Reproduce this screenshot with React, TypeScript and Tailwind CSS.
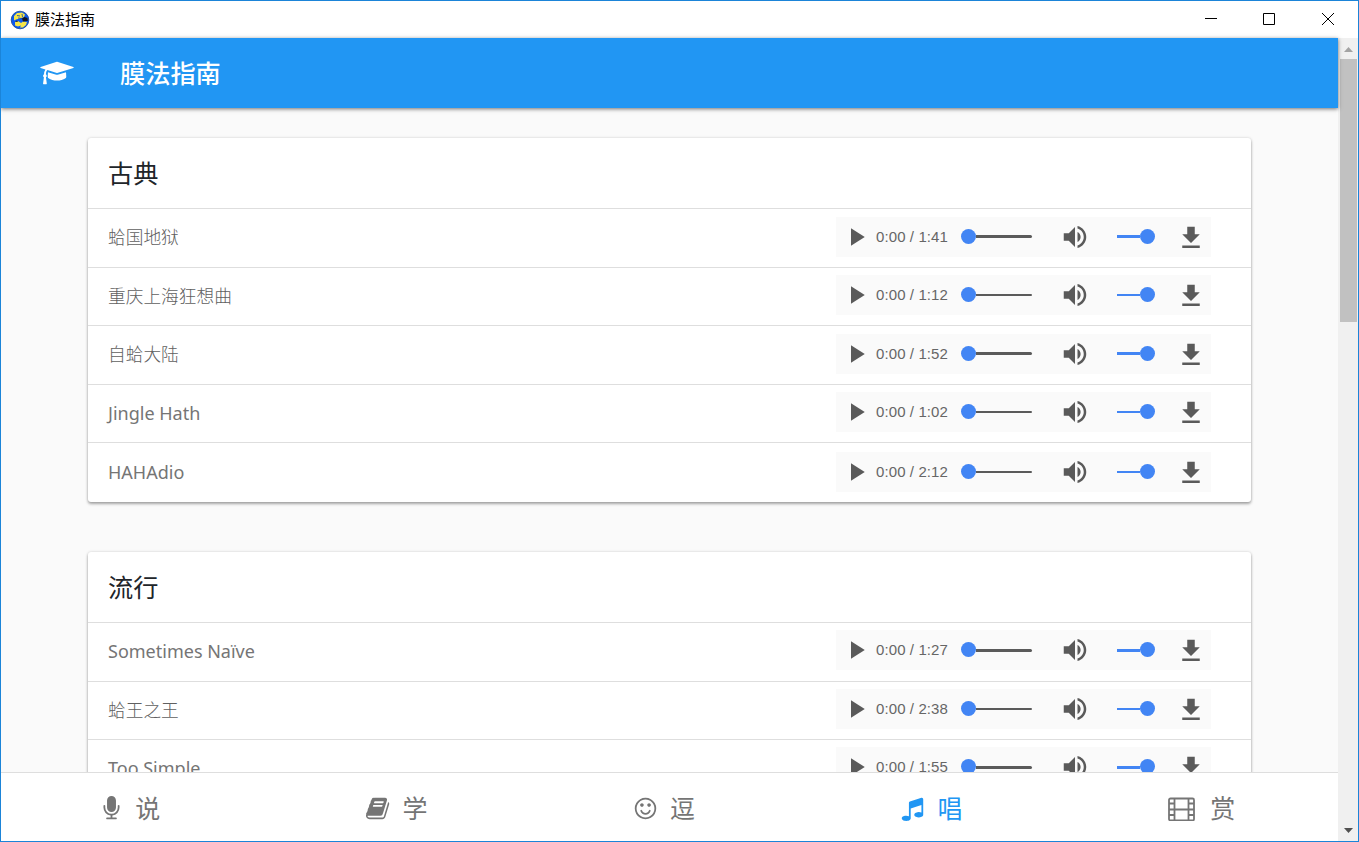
const CAP =
  "M1774 836l18 316q4 69-82 128t-235 93.500-323 34.500-323-34.500-235-93.500-82-128l18-316 574 181q22 7 48 7t48-7zm530-324q0 23-22 31l-1120 352q-4 1-10 1t-10-1l-652-206q-43 34-71 111.500t-34 178.500q63 36 63 109 0 69-58 107l58 433q2 14-8 25-9 11-24 11h-192q-15 0-24-11-10-11-8-25l58-433q-58-38-58-107 0-73 65-111 11-207 98-330l-333-104q-22-8-22-31t22-31l1120-352q4-1 10-1t10 1l1120 352q22 8 22 31z";
const MIC =
  "M1472 704v128q0 221-147.500 384.500t-364.500 187.500v132h256q26 0 45 19t19 45-19 45-45 19h-640q-26 0-45-19t-19-45 19-45 45-19h256v-132q-217-24-364.500-187.500t-147.500-384.500v-128q0-26 19-45t45-19 45 19 19 45v128q0 185 131.500 316.500t316.500 131.500 316.500-131.500 131.500-316.500v-128q0-26 19-45t45-19 45 19 19 45zm-256-384v512q0 132-94 226t-226 94-226-94-94-226v-512q0-132 94-226t226-94 226 94 94 226z";
const BOOK =
  "M1639 478q40 57 18 129l-275 906q-19 64-76.500 107.500t-122.500 43.500h-923q-77 0-148.500-53.500t-99.500-131.500q-24-67-2-127 0-4 3-27t4-37q1-8-3-21.500t-3-19.500q2-11 8-21t16.500-23.500 16.500-23.500q23-38 45-91.500t30-91.500q3-10 .5-30t-.5-28q3-11 17-28t17-23q21-36 42-92t25-90q1-9-2.500-32t.5-28q4-13 22-30.500t22-22.500q19-26 42.500-84.500t27.500-96.500q1-8-3-25.500t-2-26.500q2-8 9-18t18-23 17-21q8-12 16.500-30.500t15-35 16-36 19.500-32 26.500-23.500 36-11.500 47.500 5.500l-1 3q38-9 51-9h761q74 0 114 56t18 130l-274 906q-36 119-71.500 153.500t-128.500 34.500h-869q-27 0-38 15-11 16-1 43 24 70 144 70h923q29 0 56-15.500t35-41.500l300-987q7-22 5-57 38 15 59 43zm-1064 2q-4 13 2 22.500t20 9.500h608q13 0 25.500-9.500t16.500-22.500l21-64q4-13-2-22.500t-20-9.500h-608q-13 0-25.500 9.500t-16.500 22.500zm-83 256q-4 13 2 22.500t20 9.500h608q13 0 25.500-9.500t16.500-22.500l21-64q4-13-2-22.500t-20-9.500h-608q-13 0-25.500 9.500t-16.500 22.500z";
const SMILE =
  "M1262 1075q-37 121-138 195t-228 74-228-74-138-195q-8-25 4-48.500t38-31.500q25-8 48.500 4t31.500 38q25 80 92.500 129.500t151.500 49.500 151.500-49.500 92.500-129.500q8-26 32-38t49-4 37 31.500 4 48.500zm-494-435q0 53-37.500 90.500t-90.500 37.500-90.500-37.500-37.500-90.500 37.500-90.500 90.500-37.500 90.500 37.500 37.500 90.500zm512 0q0 53-37.500 90.500t-90.500 37.500-90.500-37.500-37.500-90.500 37.500-90.500 90.500-37.500 90.500 37.500 37.500 90.500zm256 256q0-130-51-248.500t-136.500-204-204-136.500-248.500-51-248.500 51-204 136.500-136.500 204-51 248.500 51 248.500 136.500 204 204 136.500 248.500 51 248.500-51 204-136.500 136.500-204 51-248.500zm128 0q0 209-103 385.500t-279.500 279.500-385.500 103-385.500-103-279.500-279.500-103-385.500 103-385.500 279.500-279.500 385.500-103 385.500 103 279.500 279.500 103 385.500z";
const MUSIC =
  "M1664 224v1120q0 50-34 89t-86 60.500-103.500 32-96.500 10.500-96.500-10.500-103.500-32-86-60.500-34-89 34-89 86-60.500 103.500-32 96.500-10.500q105 0 192 39v-537l-768 237v709q0 50-34 89t-86 60.500-103.500 32-96.500 10.500-96.500-10.500-103.500-32-86-60.500-34-89 34-89 86-60.500 103.500-32 96.500-10.500q105 0 192 39v-967q0-31 19-56.500t49-35.500l832-256q12-4 28-4 40 0 68 28t28 68z";

type Track = { name: string; time: string; row: string; player: string; bar: string; latin?: boolean };

const classical: Track[] = [
  { name: "蛤国地狱", time: "1:41", row: "h-[59px] border-b pt-[15px]", player: "-mt-[7px]", bar: "h-[3px]" },
  { name: "重庆上海狂想曲", time: "1:12", row: "h-[58px] border-b pt-[15px]", player: "-mt-2", bar: "h-[2px]" },
  { name: "自蛤大陆", time: "1:52", row: "h-[59px] border-b pt-[15px]", player: "-mt-[7px]", bar: "h-[3px]" },
  { name: "Jingle Hath", time: "1:02", row: "h-[58px] border-b pt-[15px]", player: "-mt-2", bar: "h-[2px]", latin: true },
  { name: "HAHAdio", time: "2:12", row: "h-[59px] pt-4", player: "-mt-[7px]", bar: "h-[2px]", latin: true },
];
const popular: Track[] = [
  { name: "Sometimes Naïve", time: "1:27", row: "h-[59px] border-b pt-[15px]", player: "-mt-2", bar: "h-[3px] mt-[2px]", latin: true },
  { name: "蛤王之王", time: "2:38", row: "h-[58px] border-b pt-[15px]", player: "-mt-2", bar: "h-[2px]" },
  { name: "Too Simple", time: "1:55", row: "h-[59px] border-b pt-[15px]", player: "-mt-2", bar: "h-[3px] mt-[2px]", latin: true },
];

const tabs = [
  { label: "说", path: MIC, box: "0 0 1792 1792", icon: "w-[25px]", pad: "pr-[10px]" },
  { label: "学", path: BOOK, box: "0 0 1792 1792", icon: "mr-px w-[25px]", pad: "pr-[11px]" },
  { label: "逗", path: SMILE, box: "0 0 1792 1792", icon: "mr-px w-[25px]", pad: "pr-[11px]" },
  { label: "唱", path: MUSIC, box: "0 0 1792 1792", icon: "mr-px w-[25px]", pad: "pr-[11px]", active: true },
  { label: "赏", path: "", box: "0 0 28 25", icon: "mr-[3px] w-[28px]", pad: "pr-[5px]" },
];

function Player({ time, bar }: { time: string; bar: string }) {
  return (
    <div className="flex h-10 w-[375px] items-center bg-[#fafafa] pl-[5px] text-[#5a5a5a]">
      <svg viewBox="0 0 24 24" className="size-[30px] shrink-0" fill="currentColor">
        <path d="M8 5v14l11-7z" />
      </svg>
      <span className="ml-[5px] w-[85px] shrink-0 font-['Liberation_Sans',sans-serif] text-[15px] leading-5 tracking-[0.1px] whitespace-nowrap text-[#666]">
        0:00 / {time}
      </span>
      <span className="mb-px flex h-[15px] w-[71px] shrink-0 items-center">
        <span className="size-[15px] shrink-0 rounded-full bg-[#4285f4]" />
        <span className={`flex-1 rounded-r-full bg-[#5a5a5a] ${bar}`} />
      </span>
      <svg viewBox="0 0 24 24" className="ml-7 size-[30px] shrink-0" fill="currentColor">
        <path d="M3 9v6h4l5 5V4L7 9H3zm13.500 3c0-1.770-1.020-3.290-2.500-4.030v8.050c1.480-.73 2.500-2.250 2.500-4.020zM14 3.230v2.060c2.890.86 5 3.540 5 6.710s-2.110 5.850-5 6.710v2.060c4.010-.91 7-4.490 7-8.770s-2.990-7.860-7-8.770z" />
      </svg>
      <span className="mb-px ml-[27px] flex h-[15px] w-[38px] shrink-0 items-center">
        <span className={`flex-1 bg-[#4285f4] ${bar}`} />
        <span className="size-[15px] shrink-0 rounded-full bg-[#4285f4]" />
      </span>
      <svg viewBox="0 0 24 24" className="mt-px ml-[21px] size-[30px] shrink-0" fill="currentColor">
        <path d="M19 9h-4V3H9v6H5l7 7 7-7zM5 18v2h14v-2H5z" />
      </svg>
    </div>
  );
}

function Card({ title, tracks }: { title: string; tracks: Track[] }) {
  return (
    <section className="shrink-0 rounded-[3px] bg-white shadow-[0_2px_3px_rgba(0,0,0,0.32),0_0_3px_rgba(0,0,0,0.16)]">
      <h2 className="flex h-[71px] items-center border-b border-[#dedede] pl-5 text-[25.200px] leading-8 text-[#212529]">
        {title}
      </h2>
      {tracks.map((t) => (
        <div key={t.name} className={`flex items-start justify-between border-[#dedede] pr-10 pl-5 ${t.row}`}>
          <span
            className={`font-['Noto_Sans','Noto_Sans_CJK_SC',sans-serif] leading-[26px] ${t.latin ? "text-[18px] font-normal text-[#757575]" : "text-[17.700px] font-light text-[#606060]"}`}
          >
            {t.name}
          </span>
          <div className={t.player}>
            <Player time={t.time} bar={t.bar} />
          </div>
        </div>
      ))}
    </section>
  );
}

export default function App() {
  return (
    <div className="flex h-[842px] w-[1359px] flex-col overflow-hidden border border-[#1b84d8] bg-white font-['Open_Sans','Noto_Sans_CJK_SC',sans-serif]">
      <header className="flex h-[37px] shrink-0 items-center pl-[9px] text-black">
        <svg viewBox="0 0 20 20" className="size-5">
          <circle cx="10" cy="10" r="8.800" fill="#0a58f0" stroke="#17458e" strokeWidth=".8" />
          <path d="M4 6l3-3 5-.5 3 2-1 2.500-4 1.500-4 1-2 1zM5 12l3-1 3 2 2-1.500 4 .5-1 3-3 2.500-3 0 1-2-3 1-3-1z" fill="#f5e548" />
          <path d="M12 8.500l2.500-1.500 3 1 .3 3-4.800.5zM5 11.500l2-1 1 1.500z" fill="#14161c" />
          <path d="M7 5.500l3 .5M12 4l.5 3M8 8l4 .5" stroke="#0a3fb0" strokeWidth=".8" />
        </svg>
        <span className="-mt-[2px] ml-[5px] text-[15px] leading-5">膜法指南</span>
        <svg viewBox="0 0 153 37" className="ml-auto h-[37px] w-[153px]" fill="none" stroke="#000">
          <path d="M0 17.500h12M58.500 12.500h11v11h-11zM117 12l12 12M129 12l-12 12" />
        </svg>
      </header>
      <div className="flex min-h-0 flex-1">
        <div className="flex min-w-0 flex-1 flex-col">
          <div className="z-10 flex h-[70px] shrink-0 items-center bg-[#2196f3] pl-[39px] text-white shadow-[0_1px_4px_rgba(0,0,0,0.55)]">
            <svg viewBox="0 0 2304 1792" className="h-[26px] w-[34px]" fill="currentColor">
              <path d={CAP} />
            </svg>
            <h1 className="ml-[46px] text-[25.200px] leading-8 font-medium">膜法指南</h1>
          </div>
          <main className="flex min-h-0 flex-1 flex-col gap-[50px] overflow-hidden bg-[#fafafa] pt-[30px] pr-[87px] pl-[87px]">
            <Card title="古典" tracks={classical} />
            <Card title="流行" tracks={popular} />
          </main>
          <nav className="grid h-[69px] shrink-0 grid-cols-5 border-t border-[#dedede] bg-white pt-[2px]">
            {tabs.map((t) => (
              <a
                key={t.label}
                className={`flex items-center justify-center gap-[11px] text-[25px] leading-8 ${t.pad} ${t.active ? "text-[#2196f3]" : "text-[#757575]"}`}
              >
                <svg viewBox={t.box} className={`h-[25px] ${t.icon}`} fill="currentColor">
                  {t.path ? (
                    <path d={t.path} />
                  ) : (
                    <path
                      d="M2.500 2.500h22a1.500 1.500 0 0 1 1.500 1.500v19a1.500 1.500 0 0 1-1.500 1.500h-22a1.500 1.500 0 0 1-1.500-1.500v-19a1.500 1.500 0 0 1 1.500-1.500zM6.500 2.500v22M20.500 2.500v22M6.500 13.500h14M1 7.500h5.500M1 13.500h5.500M1 19h5.500M20.500 7.500h5.500M20.500 13.500h5.500M20.500 19h5.500"
                      fill="none"
                      stroke="currentColor"
                      strokeWidth="1.800"
                    />
                  )}
                </svg>
                <span>{t.label}</span>
              </a>
            ))}
          </nav>
        </div>
        <aside className="flex w-5 shrink-0 flex-col items-center bg-[#f0f0f0]">
          <svg viewBox="0 0 20 21" className="h-[21px] w-5 shrink-0">
            <path d="M6 14l4.500-5 4.500 5z" fill="#a3a3a3" />
          </svg>
          <div className="ml-px h-[263px] w-[17px] bg-[#c1c1c1]" />
          <svg viewBox="0 0 20 21" className="mt-auto h-[21px] w-5 shrink-0">
            <path d="M6 8l4.500 5 4.500-5z" fill="#505050" />
          </svg>
        </aside>
      </div>
    </div>
  );
}
